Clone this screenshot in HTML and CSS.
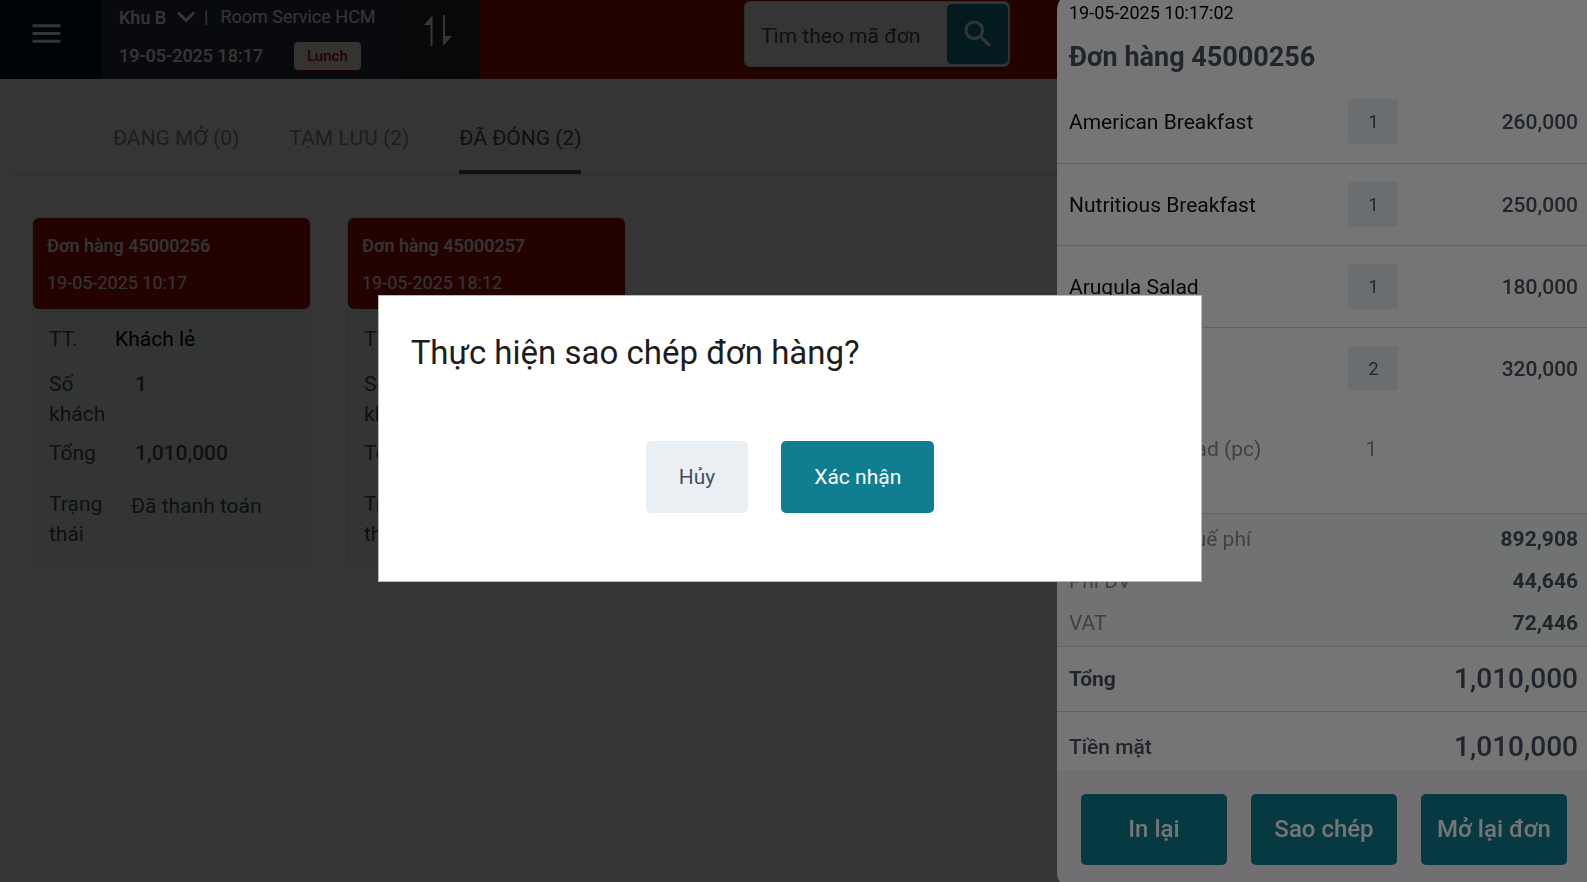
FILE: index.html
```
<!DOCTYPE html>
<html lang="vi">
<head>
  <meta charset="UTF-8" />
  <meta name="viewport" content="width=device-width, initial-scale=1.0" />
  <title>Room Service HCM | Đơn hàng</title>
  <link rel="stylesheet" href="styles.css">
</head>
<body>
<header class="topbar">
  <button type="button" class="menu-btn" aria-label="Menu">
    <svg width="37" height="37" viewBox="0 0 24 24" fill="currentColor"><path d="M3 18h18v-2H3v2zm0-5h18v-2H3v2zm0-7v2h18V6H3z"/></svg>
  </button>
  <div class="outlet">
    <div class="outlet-row">
      <div class="area">
        <select class="area-select" aria-label="Khu vực">
          <option>Khu B</option>
        </select>
        <svg class="area-arrow" width="18" height="12" viewBox="0 0 18 12" fill="none" stroke="currentColor" stroke-width="3"><path d="M1 1.5l8 8 8-8"/></svg>
      </div>
      <span class="divider">|</span>
      <span>Room Service HCM</span>
    </div>
    <div class="outlet-row">
      <span class="clock">19-05-2025 18:17</span>
      <span class="shift">Lunch</span>
    </div>
  </div>
  <button type="button" class="sort-btn" aria-label="Sắp xếp">
    <svg width="28" height="31" viewBox="0 0 28 31" fill="currentColor"><path d="M8.500 0v31H6.500V10H0zM19 31V0h2v21h7z"/></svg>
  </button>
  <form class="search">
    <input type="text" class="search-input" placeholder="Tìm theo mã đơn" aria-label="Tìm theo mã đơn" />
    <button type="submit" class="search-btn" aria-label="Tìm">
      <svg width="36" height="36" viewBox="0 0 24 24" fill="currentColor"><path d="M15.500 14h-.79l-.28-.27C15.410 12.590 16 11.110 16 9.500 16 5.910 13.090 3 9.500 3S3 5.910 3 9.500 5.910 16 9.500 16c1.610 0 3.090-.59 4.230-1.570l.27.28v.79l5 4.990L20.490 19l-4.990-5zm-6 0C7.010 14 5 11.990 5 9.500S7.010 5 9.500 5 14 7.010 14 9.500 11.990 14 9.500 14z"/></svg>
    </button>
  </form>
</header>

<main>
  <nav class="tabs">
    <a href="#open">ĐANG MỞ (0)</a>
    <a href="#saved">TẠM LƯU (2)</a>
    <a href="#closed" class="active">ĐÃ ĐÓNG (2)</a>
  </nav>

  <section class="orders">
    <article class="order">
      <div class="order-head">
        <h2>Đơn hàng 45000256</h2>
        <p>19-05-2025 10:17</p>
      </div>
      <dl class="order-body">
        <div class="guest"><dt>TT.</dt><dd>Khách lẻ</dd></div>
        <div class="people"><dt>Số khách</dt><dd>1</dd></div>
        <div class="sum"><dt>Tổng</dt><dd>1,010,000</dd></div>
        <div class="state"><dt>Trạng thái</dt><dd>Đã thanh toán</dd></div>
      </dl>
    </article>
    <article class="order">
      <div class="order-head">
        <h2>Đơn hàng 45000257</h2>
        <p>19-05-2025 18:12</p>
      </div>
      <dl class="order-body">
        <div class="guest"><dt>TT.</dt><dd>Khách lẻ</dd></div>
        <div class="people"><dt>Số khách</dt><dd>1</dd></div>
        <div class="sum"><dt>Tổng</dt><dd>1,010,000</dd></div>
        <div class="state"><dt>Trạng thái</dt><dd>Đã thanh toán</dd></div>
      </dl>
    </article>
  </section>
</main>

<div class="backdrop"></div>

<aside class="drawer">
  <div class="drawer-head">
    <p>19-05-2025 10:17:02</p>
    <h2>Đơn hàng 45000256</h2>
  </div>
  <table class="items">
    <tbody>
      <tr>
        <td>American Breakfast</td>
        <td class="qty"><span>1</span></td>
        <td class="price">260,000</td>
      </tr>
      <tr>
        <td>Nutritious Breakfast</td>
        <td class="qty"><span>1</span></td>
        <td class="price">250,000</td>
      </tr>
      <tr>
        <td>Arugula Salad</td>
        <td class="qty"><span>1</span></td>
        <td class="price">180,000</td>
      </tr>
      <tr>
        <td>Beef Burger</td>
        <td class="qty"><span>2</span></td>
        <td class="price">320,000</td>
      </tr>
      <tr class="extra">
        <td>+ Garden Salad (pc)</td>
        <td class="qty">1</td>
        <td></td>
      </tr>
    </tbody>
  </table>
  <dl class="fees">
    <div><dt>Tổng trước thuế phí</dt><dd>892,908</dd></div>
    <div><dt>Phí DV</dt><dd>44,646</dd></div>
    <div><dt>VAT</dt><dd>72,446</dd></div>
  </dl>
  <dl class="totals">
    <div class="total"><dt>Tổng</dt><dd>1,010,000</dd></div>
    <div class="cash"><dt>Tiền mặt</dt><dd>1,010,000</dd></div>
  </dl>
  <div class="drawer-actions">
    <button type="button">In lại</button>
    <button type="button">Sao chép</button>
    <button type="button">Mở lại đơn</button>
  </div>
</aside>

<div class="backdrop dialog-wrap">
  <div class="dialog" role="dialog" aria-modal="true" aria-labelledby="dialogTitle">
    <h1 id="dialogTitle">Thực hiện sao chép đơn hàng?</h1>
    <div class="dialog-actions">
      <button type="button" class="cancel">Hủy</button>
      <button type="button" class="confirm">Xác nhận</button>
    </div>
  </div>
</div>
</body>
</html>
```
FILE: styles.css
```
* {
  box-sizing: border-box;
}

body {
  margin: 0;
  min-height: 100vh;
  background: #fff;
  color: #474f60;
  font-family: Roboto, sans-serif;
  font-size: 21px;
  line-height: 30px;
  overflow: hidden;
}

h1, h2, p, dl, dd {
  margin: 0;
}

button, input, select {
  font-family: inherit;
  border: none;
}

button {
  padding: 0;
  cursor: pointer;
}

svg {
  display: block;
}

/* top bar */
.topbar {
  display: flex;
  height: 79px;
  background: #ab1000;
  color: #fff;
}

.menu-btn,
.sort-btn {
  display: flex;
  justify-content: center;
  color: #fff;
}

.menu-btn {
  width: 102px;
  padding: 15px 9px 0 0;
  background: #001321;
}

.sort-btn {
  width: 80px;
  padding: 15px 2px 0 0;
  background: #2b2b2b;
}

.outlet {
  width: 297px;
  padding: 2px 17px 0;
  background: #2f3447;
  font-size: 18px;
}

.outlet-row {
  display: flex;
  align-items: center;
  height: 30px;
  white-space: nowrap;
}

.outlet-row + .outlet-row {
  margin-top: 9px;
}

.area {
  display: flex;
  align-items: center;
}

.area-select {
  appearance: none;
  width: 76px;
  margin-right: -18px;
  padding: 0;
  background: transparent;
  color: #fff;
  font-size: 18px;
  font-weight: 500;
}

.area-arrow {
  pointer-events: none;
}

.divider {
  margin: 0 12px 0 9px;
}

.clock {
  width: 174px;
  font-weight: 500;
}

.shift {
  padding: 0 13px;
  border: 1px solid #ab1000;
  border-radius: 5px;
  background: #fff0ef;
  color: #ab1000;
  font-size: 15px;
  font-weight: 500;
  line-height: 28px;
}

.search {
  display: flex;
  width: 266px;
  height: 66px;
  margin: 1px 0 0 265px;
  padding: 2px 1px;
  border: 1px solid #cbd5d9;
  border-radius: 6px;
  background: #fff;
}

.search-input {
  flex: 1;
  min-width: 0;
  padding: 4px 0 0 15px;
  background: transparent;
  font-size: 21px;
}

.search-input::placeholder {
  color: #474f60;
}

.search-btn {
  display: flex;
  align-items: center;
  justify-content: center;
  width: 61px;
  border-radius: 5px;
  background: #117d91;
  color: #fff;
}

/* tabs */
.tabs {
  display: flex;
  gap: 50px;
  margin: 29px 0 0 11px;
  padding-left: 102px;
  border-bottom: 1px solid #dcdcdc;
}

.tabs a {
  height: 66px;
  padding-top: 15px;
  color: #8a8d96;
  text-decoration: none;
}

.tabs .active {
  border-bottom: 4px solid #474f60;
  border-radius: 3px 3px 0 0;
  color: #474f60;
}

/* order cards */
.orders {
  display: flex;
  gap: 36px;
  padding: 42px 32px;
}

.order {
  width: 279px;
  border: 1px solid #e3e8e6;
  border-radius: 6px;
  background: #f3faf6;
}

.order-head {
  height: 91px;
  padding: 13px 14px;
  border-radius: 6px;
  background: #ab1000;
  color: #fff;
  font-size: 18px;
}

.order-head h2 {
  font-size: 18px;
  font-weight: 500;
}

.order-head p {
  margin-top: 7px;
}

.order-body {
  padding: 15px 16px;
}

.order-body div {
  display: flex;
}

.order-body dt {
  flex: none;
  width: 66px;
}

.guest dd {
  color: #000;
}

.people {
  margin-top: 15px;
}

.sum {
  margin-top: 9px;
}

.people dd,
.sum dd {
  padding-left: 20px;
  font-weight: 500;
}

.state {
  margin-top: 21px;
}

.state dd {
  padding: 2px 0 0 16px;
}

/* order drawer */
.backdrop {
  position: fixed;
  inset: 0;
  background: rgba(0, 0, 0, 0.54);
}

.drawer {
  position: fixed;
  top: -8px;
  right: 0;
  bottom: -8px;
  display: flex;
  flex-direction: column;
  width: 33.4%;
  border-radius: 18px 0 0 18px;
  background: #fff;
  overflow: hidden;
}

.drawer-head {
  padding: 6px 12px 0;
  color: #000;
}

.drawer-head p {
  font-size: 18px;
}

.drawer-head h2 {
  margin-top: 9px;
  color: #474f60;
  font-size: 27px;
  font-weight: 700;
  line-height: 40px;
}

.items {
  width: 100%;
  margin-top: 4px;
  border-collapse: collapse;
  table-layout: fixed;
}

.items tr {
  border-bottom: 1px solid #d0d4d6;
}

.items tr:nth-child(4) {
  border-bottom: none;
}

.items td {
  height: 82px;
  padding: 1px 0 0 12px;
  color: #111;
}

.items td:nth-child(2) {
  width: 50px;
}

.items td:nth-child(1) {
  width: 55%;
}

.items .qty {
  padding: 0;
  text-align: center;
}

.qty span {
  display: block;
  border-radius: 4px;
  background: #eaeff4;
  color: #474f60;
  font-size: 18px;
  line-height: 45px;
}

.items .price {
  padding-right: 9px;
  color: #474f60;
  font-weight: 500;
  text-align: right;
}

.items .extra td {
  height: 104px;
  padding: 0 4px 24px 20px;
  color: #8a8d96;
}

.items .extra .qty {
  padding-left: 0;
}

.fees {
  padding: 4px 9px 2px 12px;
  border-bottom: 1px solid #d0d4d6;
  background: #f3faf6;
}

.fees div,
.totals div {
  display: flex;
  align-items: center;
  justify-content: space-between;
}

.fees div {
  height: 42px;
}

.fees dt {
  color: #8a8d96;
}

.fees dd {
  font-weight: 700;
}

.totals {
  flex: 1;
  font-weight: 500;
}

.totals div {
  padding: 0 9px 0 12px;
}

.totals dd {
  font-size: 28px;
  font-weight: 500;
}

.totals .total {
  height: 65px;
  border-bottom: 1px solid #d0d4d6;
}

.total dt {
  font-weight: 700;
}

.totals .cash {
  height: 58px;
  padding-top: 12px;
}

.drawer-actions {
  display: flex;
  gap: 24px;
  padding: 24px 20px 26px 24px;
  background: #f7f1f7;
}

.drawer-actions button {
  flex: 1;
  height: 71px;
  border-radius: 5px;
  background: #117d91;
  color: #fff;
  font-size: 24px;
  font-weight: 500;
}

/* confirm dialog */
.dialog-wrap {
  display: flex;
  align-items: center;
  justify-content: center;
  padding: 0 7px 5px 0;
}

.dialog {
  width: 52.2%;
  padding: 33px 32px 68px;
  border: 1px solid #bbb;
  background: #fff;
}

.dialog h1 {
  color: #1d1d20;
  font-size: 33px;
  font-weight: 400;
  line-height: 48px;
}

.dialog-actions {
  display: flex;
  justify-content: center;
  gap: 33px;
  margin-top: 64px;
}

.dialog-actions button {
  height: 72px;
  padding: 0 33px;
  border-radius: 5px;
  font-size: 21px;
}

.cancel {
  background: #eaeff4;
  color: #474f60;
}

.confirm {
  background: #117d91;
  color: #fff;
}
```
